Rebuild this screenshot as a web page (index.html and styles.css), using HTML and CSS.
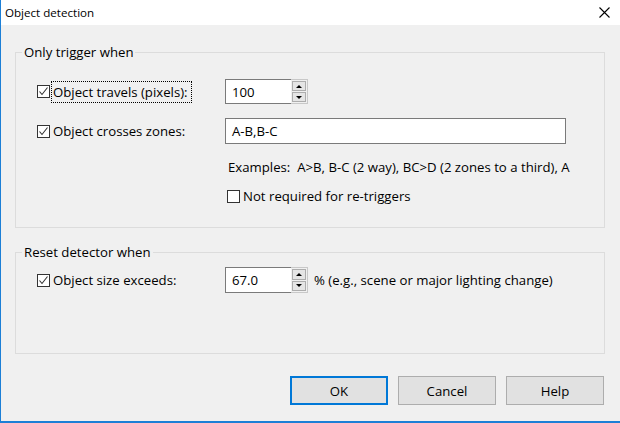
FILE: index.html
```html
<!DOCTYPE html>
<html lang="en">
<head>
  <meta charset="UTF-8">
  <meta name="viewport" content="width=device-width, initial-scale=1.0">
  <title>Object detection</title>
  <link rel="stylesheet" href="styles.css">
</head>
<body>
  <div class="window">
    <div class="titlebar">
      <span class="title">Object detection</span>
      <svg class="close" width="11" height="11" viewBox="0 0 11 11">
        <path d="M0.5 0.5 L10.5 10.5 M10.5 0.5 L0.5 10.5" stroke="#000" stroke-width="1.1" fill="none"/>
      </svg>
    </div>

    <div class="content">
      <fieldset class="group group-trigger">
        <legend>Only trigger when</legend>
        <div class="group-body">
          <div class="row row-travel">
            <label class="check">
              <span class="box"><svg width="11" height="11" viewBox="0 0 11 11"><path d="M1.5 5.5 L4 8.5 L9.5 1.5" stroke="#333" stroke-width="1.1" fill="none"/></svg></span>
              <span class="focus">Object travels (pixels):</span>
            </label>
            <div class="spin">
              <div class="field spin-field">100</div>
              <div class="spin-btns">
                <span class="spin-btn"><span class="arrow up"></span></span>
                <span class="spin-btn"><span class="arrow down"></span></span>
              </div>
            </div>
          </div>

          <div class="row row-zones">
            <label class="check">
              <span class="box"><svg width="11" height="11" viewBox="0 0 11 11"><path d="M1.5 5.5 L4 8.5 L9.5 1.5" stroke="#333" stroke-width="1.1" fill="none"/></svg></span>
              <span>Object crosses zones:</span>
            </label>
            <div class="field zones-field">A-B,B-C</div>
          </div>

          <div class="row row-examples">
            <span></span>
            <span class="examples">Examples:&nbsp; A&gt;B, B-C (2 way), BC&gt;D (2 zones to a third), A</span>
          </div>

          <div class="row row-retrigger">
            <span></span>
            <label class="check">
              <span class="box"></span>
              <span>Not required for re-triggers</span>
            </label>
          </div>
        </div>
      </fieldset>

      <fieldset class="group group-reset">
        <legend>Reset detector when</legend>
        <div class="group-body">
          <div class="row row-size">
            <label class="check">
              <span class="box"><svg width="11" height="11" viewBox="0 0 11 11"><path d="M1.5 5.5 L4 8.5 L9.5 1.5" stroke="#333" stroke-width="1.1" fill="none"/></svg></span>
              <span>Object size exceeds:</span>
            </label>
            <div class="size-ctrl">
              <div class="spin">
                <div class="field spin-field">67.0</div>
                <div class="spin-btns">
                  <span class="spin-btn"><span class="arrow up"></span></span>
                  <span class="spin-btn"><span class="arrow down"></span></span>
                </div>
              </div>
              <span class="hint">% (e.g., scene or major lighting change)</span>
            </div>
          </div>
        </div>
      </fieldset>

      <div class="buttons">
        <button class="btn btn-default">OK</button>
        <button class="btn">Cancel</button>
        <button class="btn">Help</button>
      </div>
    </div>
  </div>
</body>
</html>
```

FILE: styles.css
```css
* {
  box-sizing: border-box;
}

body {
  margin: 0;
  font-family: "Open Sans", "Noto Sans", sans-serif;
  font-size: 13.2px;
  color: #000;
  background-color: #f0f0f0;
}

.window {
  width: 620px;
  height: 423px;
  background-color: #f0f0f0;
  border-left: 1px solid #1c7fd6;
  border-bottom: 2px solid #1c7fd6;
}

.titlebar {
  height: 25px;
  background-color: #fff;
  display: flex;
  align-items: center;
  justify-content: space-between;
  padding: 0 10px 0 4px;
}

.title {
  font-size: 11.6px;
  line-height: 16px;
}

.content {
  padding: 0 15px 0 14px;
}

.group {
  margin: 18px 0 0 0;
  padding: 0;
  border: 1px solid #dcdcdc;
  min-width: 0;
}

.group legend {
  margin-left: 6px;
  padding: 0 2px;
  line-height: 18px;
}

.group-body {
  padding: 18px 0 22px 21px;
}

.group-reset {
  margin-top: 15px;
}

.group-reset .group-body {
  padding-top: 6px;
  padding-bottom: 60px;
}

.row {
  display: grid;
  grid-template-columns: 188px 1fr;
  align-items: center;
}

.row-travel {
  height: 25px;
}

.row-zones {
  height: 26px;
  margin-top: 14px;
}

.row-examples {
  height: 18px;
  margin-top: 14px;
}

.row-retrigger {
  height: 18px;
  margin-top: 11px;
}

.row-size {
  height: 26px;
}

.check {
  display: flex;
  align-items: center;
  white-space: nowrap;
}

.box {
  width: 13px;
  height: 13px;
  border: 1px solid #333;
  background-color: #fff;
  margin-right: 3px;
  display: flex;
  align-items: center;
  justify-content: center;
  flex: none;
}

.box svg {
  display: block;
}

.focus {
  outline: 1px dotted #000;
  outline-offset: 1px;
  line-height: 18px;
  padding: 0 2px 0 0;
}

.row-retrigger .check {
  margin-left: 2px;
}

.field {
  background-color: #fff;
  border: 1px solid #7a7a7a;
  padding-left: 6px;
  display: flex;
  align-items: center;
}

.spin {
  display: flex;
  height: 100%;
}

.spin-field {
  width: 66px;
  height: 100%;
  border-right: none;
}

.spin-btns {
  width: 17px;
  display: flex;
  flex-direction: column;
  gap: 1px;
  padding: 1px;
  border: 1px solid #c8c8c8;
  border-left: none;
}

.spin-btn {
  flex: 1;
  background-color: #e5e5e5;
  border: 1px solid #adadad;
  display: flex;
  align-items: center;
  justify-content: center;
}

.arrow {
  width: 0;
  height: 0;
  border-left: 3px solid transparent;
  border-right: 3px solid transparent;
}

.arrow.up {
  border-bottom: 3px solid #000;
}

.arrow.down {
  border-top: 3px solid #000;
}

.zones-field {
  width: 341px;
  height: 100%;
}

.examples {
  margin-left: 3px;
  white-space: nowrap;
}

.size-ctrl {
  display: flex;
  align-items: center;
  height: 100%;
}

.hint {
  margin-left: 6px;
  white-space: nowrap;
}

.buttons {
  display: flex;
  justify-content: flex-end;
  gap: 10px;
  margin-top: 22px;
  padding-right: 1px;
}

.btn {
  width: 98px;
  height: 29px;
  font-family: inherit;
  font-size: 13.2px;
  background-color: #e1e1e1;
  border: 1px solid #adadad;
  color: #000;
  padding: 0;
}

.btn-default {
  border: 2px solid #0078d7;
}
```
